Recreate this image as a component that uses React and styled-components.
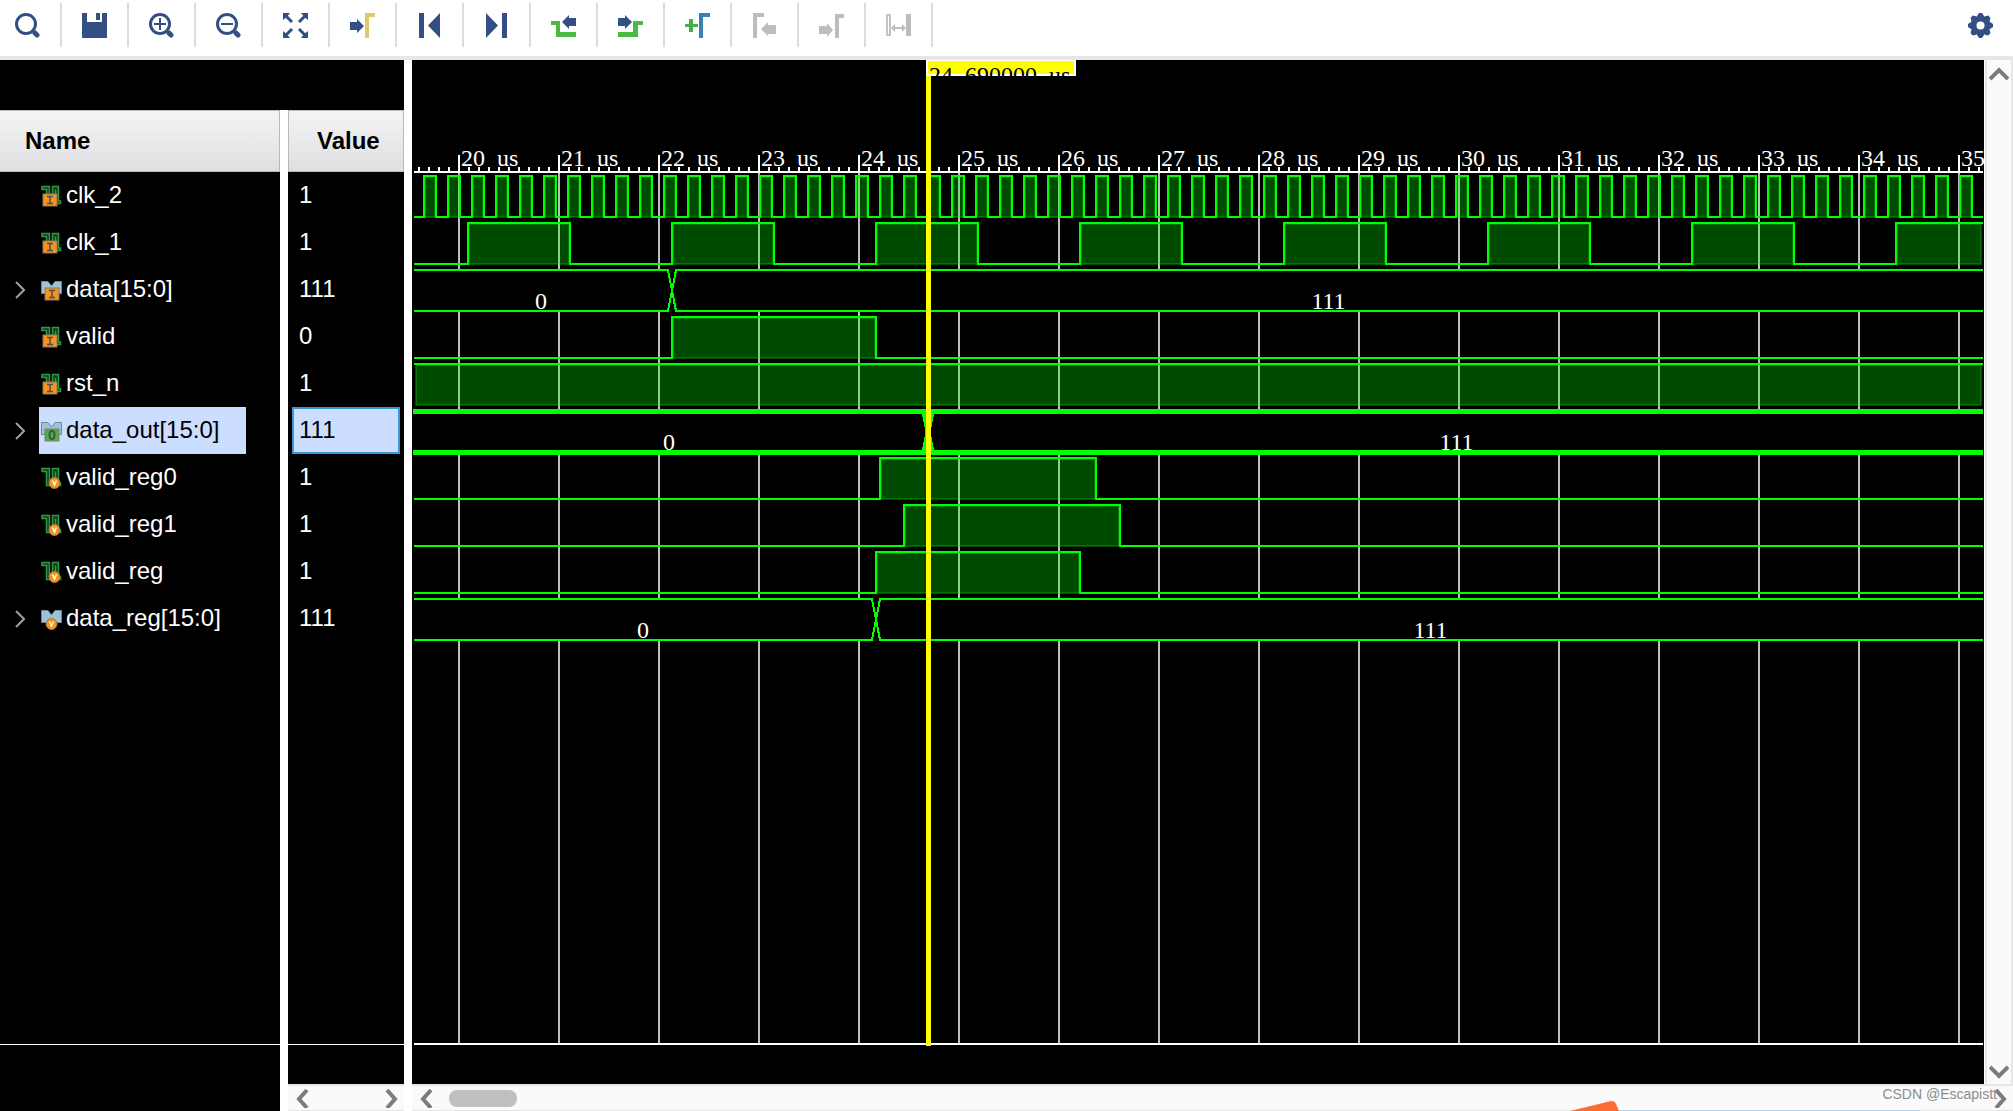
import { useLayoutEffect, useRef, useState } from "react";
import styled, { createGlobalStyle } from "styled-components";

const ROW = 47;
const PX_PER_US = 100;
const RULER_Y = 112;

const pulses = (first, high, period) => {
  const list = [];
  for (let i = 0; i < 200; i++) {
    list.push([first + i * period, first + i * period + high]);
  }
  return list;
};

const signals = [
  { name: "clk_2", value: "1", icon: "in", high: pulses(19.65, 0.12, 0.24) },
  { name: "clk_1", value: "1", icon: "in", high: pulses(20.09, 1.02, 2.04) },
  { name: "data[15:0]", value: "111", icon: "busIn", change: 22.13 },
  { name: "valid", value: "0", icon: "in", high: [[22.13, 24.17]] },
  { name: "rst_n", value: "1", icon: "in", high: [[0, 1000]] },
  {
    name: "data_out[15:0]",
    value: "111",
    icon: "busOut",
    change: 24.69,
    selected: true,
  },
  { name: "valid_reg0", value: "1", icon: "reg", high: [[24.21, 26.37]] },
  { name: "valid_reg1", value: "1", icon: "reg", high: [[24.45, 26.61]] },
  { name: "valid_reg", value: "1", icon: "reg", high: [[24.17, 26.21]] },
  { name: "data_reg[15:0]", value: "111", icon: "busReg", change: 24.17 },
];

const timeX = (t) => Math.round((t - 20) * PX_PER_US) + 47;

const arrowRight = (y) => `M0 ${y - 4}H7V${y - 7}L14 ${y}L7 ${y + 7}V${y + 4}H0Z`;
const arrowLeft = (y) =>
  `M25 ${y - 4}H18V${y - 7}L11 ${y}L18 ${y + 7}V${y + 4}H25Z`;

const Lens = ({ children }) => (
  <>
    <circle cx="11" cy="11" r="9.5" fill="none" stroke="#334f84" strokeWidth="3" />
    <path d="M20 20L22 22" stroke="#334f84" strokeWidth="5" strokeLinecap="round" />
    {children}
  </>
);

const tools = [
  { label: "Search", art: <Lens /> },
  {
    label: "Save",
    art: <path d="M0 0H5V9H20V0H25V25H0ZM14 0H18V7H14Z" />,
  },
  {
    label: "Zoom in",
    art: (
      <Lens>
        <path d="M5 11H17M11 5V17" stroke="#334f84" strokeWidth="2" />
      </Lens>
    ),
  },
  {
    label: "Zoom out",
    art: (
      <Lens>
        <path d="M5 11H17" stroke="#334f84" strokeWidth="2" />
      </Lens>
    ),
  },
  {
    label: "Zoom fit",
    art: (
      <>
        <path d="M0 0H7L5 2.5L2.5 5L0 7ZM25 0V7L22.5 5L20 2.5L18 0ZM0 25V18L2.5 20L5 22.5L7 25ZM25 25H18L20 22.5L22.5 20L25 18Z" />
        <path
          d="M3 3L9 9M22 3L16 9M3 22L9 16M22 22L16 16"
          stroke="#334f84"
          strokeWidth="3"
        />
      </>
    ),
  },
  {
    label: "Go to cursor",
    art: (
      <>
        <path d={arrowRight(13)} />
        <path d="M15 0H25V4H19V25H15Z" fill="#dfc964" />
      </>
    ),
  },
  { label: "Go to start", art: <path d="M2 0H7V25H2ZM23 0V25L11 12.5Z" /> },
  { label: "Go to end", art: <path d="M2 0L14 12.5L2 25ZM18 0H23V25H18Z" /> },
  {
    label: "Previous transition",
    art: (
      <>
        <path d={arrowLeft(9)} />
        <path d="M0 8H9V19H25V24H5V12H0Z" fill="#4cb944" />
      </>
    ),
  },
  {
    label: "Next transition",
    art: (
      <>
        <path d={arrowRight(9)} />
        <path d="M0 19H15V8H25V12H20V24H0Z" fill="#4cb944" />
      </>
    ),
  },
  {
    label: "Add marker",
    art: (
      <>
        <path d="M0 11H4V6H8V11H13V14H8V19H4V14H0Z" fill="#45b04a" />
        <path d="M14 0H25V4H18V25H14Z" fill="#3a80b4" />
      </>
    ),
  },
  {
    label: "Previous marker",
    disabled: true,
    art: (
      <path d="M1 0H12V4H5V25H1ZM24 12H16V9L9 16L16 23V21H24Z" fill="#bdbdbd" />
    ),
  },
  {
    label: "Next marker",
    disabled: true,
    art: (
      <path d="M16 1H25V5H20V25H16ZM0 13H8V10L14 17L8 24V21H0Z" fill="#bdbdbd" />
    ),
  },
  {
    label: "Swap markers",
    disabled: true,
    art: (
      <>
        <path d="M1 2H4V22H1Z" fill="none" stroke="#c4c4c4" strokeWidth="2" />
        <path d="M20 1H25V23H20ZM5 15L9 11V14H16V11L20 15L16 19V16H9V19Z" fill="#bdbdbd" />
      </>
    ),
  },
];

const Wave = () => (
  <path
    d="M1 1.5H8.5V16H11.5V1.5H17.5V16H19.5V18.5H14.5V4.5V18.5H5.5V4.5H1Z"
    fill="#123d1c"
    stroke="#309948"
    strokeWidth="1.5"
  />
);

const Bus = () => (
  <path
    d="M0.5 2.5H7L10.5 7L14 2.5H20.5V14.5H0.5Z"
    fill="#9cc3d8"
    stroke="#6e8a98"
    strokeWidth="1"
  />
);

const Port = ({ x, fill, letter }) => (
  <>
    <rect x={x} y="9" width="14" height="12" fill={fill} stroke="#8a7a60" />
    {letter === "I" ? (
      <path
        d={`M${x + 4} 11.5H${x + 10}M${x + 7} 11V19M${x + 4} 18.5H${x + 10}`}
        stroke="#4d4d4d"
        strokeWidth="1.5"
      />
    ) : (
      <ellipse cx={x + 7} cy="15" rx="2.5" ry="4" fill="none" stroke="#3d5a3d" strokeWidth="2" />
    )}
  </>
);

const Reg = ({ x }) => (
  <>
    <circle cx={x} cy="16" r="5.5" fill="#f7931e" stroke="#a8763a" strokeWidth="1" />
    <path d={`M${x - 2} 13.5L${x} 18L${x + 2} 13.5`} fill="none" stroke="#fff" strokeWidth="1.5" />
  </>
);

const SignalIcon = ({ kind }) => (
  <svg width="21" height="22" viewBox="0 0 21 22" aria-hidden="true">
    {kind.startsWith("bus") ? <Bus /> : <Wave />}
    {kind === "in" && <Port x={2} fill="#f7931e" letter="I" />}
    {kind === "busIn" && <Port x={4} fill="#f7931e" letter="I" />}
    {kind === "busOut" && <Port x={4} fill="#4caf50" letter="O" />}
    {kind === "reg" && <Reg x={13.5} />}
    {kind === "busReg" && <Reg x={10.5} />}
  </svg>
);

const chevrons = {
  left: "M15 2L7 11L15 20",
  right: "M7 2L15 11L7 20",
  up: "M1 15L10 6L19 15",
  down: "M1 6L10 15L19 6",
};

const Arrow = ({ dir }) => (
  <svg width="20" height="20" viewBox="0 0 20 20" aria-hidden="true">
    <path d={chevrons[dir]} fill="none" stroke="#7c7c7c" strokeWidth="4" />
  </svg>
);

const BitTrace = ({ high, top, end }) => {
  const up = top + 4;
  const low = top + 45;
  const shown = high
    .map(([a, b]) => [Math.max(timeX(a), 2), Math.min(timeX(b), end)])
    .filter(([a, b]) => a < end && b > 2);
  let d = "";
  let pen = `M2 ${low}`;
  shown.forEach(([a, b]) => {
    d += a === 2 ? `M2 ${up}` : `${pen}H${a}V${up}`;
    d += `H${b}`;
    if (b < end) d += `V${low}`;
    pen = "";
  });
  if (!shown.length || shown[shown.length - 1][1] < end) d += `${pen}H${end}`;

  return (
    <>
      {shown.map(([a, b]) => {
        const x0 = a === 2 ? 3 : a;
        const x1 = b === end ? end - 1 : b;
        return (
          <g key={a} fill="#00ff00" fillOpacity="0.29">
            <rect x={x0} y={up} width={x1 - x0} height="42" />
            <rect
              x={x0 + 1.5}
              y={top + 5.5}
              width={Math.max(x1 - x0 - 3, 1)}
              height="39"
              fill="none"
              stroke="#00ff00"
              strokeOpacity="0.25"
            />
          </g>
        );
      })}
      <path d={d} fill="none" stroke="#00ff00" strokeWidth="2" />
    </>
  );
};

const BusTrace = ({ change, top, end, selected }) => {
  const x = timeX(change);
  const shift = selected ? 0.5 : 0;
  const up = top + 4 + shift;
  const low = top + 45 + shift;
  const start = selected ? 1 : 2;
  return (
    <>
      <rect x="0" y={up} width={end} height={low - up} fill="#000" />
      <path
        d={`M${start} ${up}H${x - 4}L${x + 4} ${low}H${end}M${start} ${low}H${x - 4}L${x + 4} ${up}H${end}`}
        fill="none"
        stroke="#00ff00"
        strokeWidth={selected ? 5 : 2}
      />
      <WaveText x={(2 + x - 4) / 2} y={top + 43} textAnchor="middle">
        0
      </WaveText>
      <WaveText x={(x + 4 + end) / 2 - 1} y={top + 43} textAnchor="middle">
        111
      </WaveText>
    </>
  );
};

const Ruler = ({ end }) => {
  const ticks = [];
  for (let x = 7; x < end; x += 10) {
    const major = (x - 47) % PX_PER_US === 0;
    ticks.push(
      <rect key={x} x={x - 1} y={major ? 95 : 107} width="2" height={major ? 16 : 4} />
    );
  }
  return (
    <g fill="#fff">
      {ticks}
      <rect x="2" y={RULER_Y - 1} width={end - 2} height="2" />
    </g>
  );
};

const WaveChart = () => {
  const boxRef = useRef();
  const [size, setSize] = useState({ width: 0, height: 0 });

  useLayoutEffect(() => {
    const measure = () => {
      const { clientWidth, clientHeight } = boxRef.current;
      setSize({ width: clientWidth, height: clientHeight });
    };
    measure();
    window.addEventListener("resize", measure);
    return () => window.removeEventListener("resize", measure);
  }, []);

  const { width, height } = size;
  const end = width - 1;
  const base = height - 41;
  const cursor = timeX(24.69);
  const marks = [];
  for (let t = 20; timeX(t) < end; t++) marks.push(t);

  return (
    <ChartBox ref={boxRef}>
      {width > 0 && (
        <svg width={width} height={height} shapeRendering="crispEdges">
          {marks.map((t) => (
            <rect
              key={t}
              x={timeX(t) - 1}
              y={RULER_Y}
              width="2"
              height={base - RULER_Y}
              fill="#bebebe"
            />
          ))}
          <Ruler end={end} />
          {marks.map((t) => (
            <WaveText key={t} x={timeX(t) + 2} y="106">
              {t} <tspan dx="6">us</tspan>
            </WaveText>
          ))}
          {signals.map((s, i) =>
            s.high ? (
              <BitTrace key={s.name} {...s} top={RULER_Y + i * ROW} end={end} />
            ) : (
              <BusTrace key={s.name} {...s} top={RULER_Y + i * ROW} end={end} />
            )
          )}
          <rect x="2" y={base} width={end - 2} height="2" fill="#fff" />
          <rect x={cursor - 2} y="16" width="5" height={base - 13} fill="#ffff00" />
          <svg x={cursor - 2} y="0" width="150" height="16">
            <rect width="150" height="16" fill="#fff" />
            <rect x="2" y="1" width="146" height="13" fill="#ffff00" />
            <WaveText x="3" y="23" $dark>
              24.<tspan dx="6">690000</tspan> <tspan dx="6">us</tspan>
            </WaveText>
          </svg>
        </svg>
      )}
    </ChartBox>
  );
};

const App = () => {
  return (
    <>
      <GlobalStyle />
      <Shell>
        <Toolbar>
          {tools.map((t) => (
            <ToolButton key={t.label} aria-label={t.label} disabled={t.disabled}>
              <svg width="25" height="25" viewBox="0 0 25 25">
                {t.art}
              </svg>
            </ToolButton>
          ))}
          <SettingsButton aria-label="Settings">
            <svg width="25" height="25" viewBox="0 0 25 25">
              {[0, 45, 90, 135].map((a) => (
                <path
                  key={a}
                  d="M9 3L11 0H14L16 3V22L14 25H11L9 22Z"
                  transform={`rotate(${a} 12.5 12.5)`}
                />
              ))}
              <circle cx="12.5" cy="12.5" r="9.5" />
              <circle cx="12.5" cy="12.5" r="4" fill="#fff" />
            </svg>
          </SettingsButton>
        </Toolbar>

        <Panels>
          <SignalPanel>
            <TopBand />
            <Columns>
              <Column $width="280px">
                <Header $indent="25px">Name</Header>
                <List>
                  {signals.map((s) => (
                    <NameRow key={s.name}>
                      <Expander>
                        {s.change && (
                          <ExpandButton aria-label={`Expand ${s.name}`}>
                            <svg width="10" height="18" viewBox="0 0 10 18">
                              <path
                                d="M1 1L9 9L1 17"
                                fill="none"
                                stroke="#a0a0a0"
                                strokeWidth="2"
                              />
                            </svg>
                          </ExpandButton>
                        )}
                      </Expander>
                      <NameLabel $selected={s.selected}>
                        <SignalIcon kind={s.icon} />
                        {s.name}
                      </NameLabel>
                    </NameRow>
                  ))}
                </List>
                <Footer $height="67px" />
              </Column>
              <Column $width="116px">
                <Header $indent="28px">Value</Header>
                <List>
                  {signals.map((s) => (
                    <ValueRow key={s.name} $selected={s.selected}>
                      {s.value}
                    </ValueRow>
                  ))}
                </List>
                <Footer $height="40px" />
                <HScroll>
                  <ScrollButton aria-label="Scroll values left">
                    <Arrow dir="left" />
                  </ScrollButton>
                  <ScrollButton aria-label="Scroll values right">
                    <Arrow dir="right" />
                  </ScrollButton>
                </HScroll>
              </Column>
            </Columns>
          </SignalPanel>

          <WavePanel>
            <WaveBody>
              <WaveChart />
              <VScroll>
                <ScrollButton aria-label="Scroll up">
                  <Arrow dir="up" />
                </ScrollButton>
                <ScrollButton aria-label="Scroll down">
                  <Arrow dir="down" />
                </ScrollButton>
              </VScroll>
            </WaveBody>
            <HScroll>
              <ScrollButton aria-label="Scroll waves left">
                <Arrow dir="left" />
              </ScrollButton>
              <Thumb />
              <ScrollButton aria-label="Scroll waves right">
                <Arrow dir="right" />
              </ScrollButton>
            </HScroll>
          </WavePanel>
        </Panels>
        <Sticker width="350" height="10" viewBox="0 0 350 10" aria-hidden="true">
          <path d="M49 9H350V10H49Z" fill="#b5cfe3" />
          <path d="M0 10L41 0Q45 0 46 3L49 10Z" fill="#fc6d35" />
        </Sticker>
        <Watermark>CSDN @Escapistt</Watermark>
      </Shell>
    </>
  );
};

export default App;

const GlobalStyle = createGlobalStyle`
  * {
    box-sizing: border-box;
  }
  body {
    margin: 0;
    background: #fff;
    font-family: "Liberation Sans", Arial, sans-serif;
  }
  button {
    border: none;
    background: none;
    padding: 0;
  }
  svg {
    display: block;
    flex-shrink: 0;
  }
`;

const Shell = styled.div`
  position: relative;
  display: flex;
  flex-direction: column;
  min-height: 100vh;
  overflow: hidden;
`;

const Toolbar = styled.div`
  display: flex;
  height: 60px;
  padding-top: 3px;
  background: #fff;
  border-bottom: 4px solid #e6e6e6;
`;

const ToolButton = styled.button`
  height: 44px;
  padding: 10px 20px;
  border-right: 2px solid #dcdcdc;
  fill: #334f84;

  &:first-child {
    padding-left: 15px;
  }
`;

const SettingsButton = styled.button`
  height: 44px;
  padding: 10px 20px;
  margin-left: auto;
  fill: #334f84;
`;

const Panels = styled.div`
  flex: 1;
  display: flex;
  gap: 8px;
`;

const SignalPanel = styled.div`
  display: flex;
  flex-direction: column;
  flex-shrink: 0;
`;

const TopBand = styled.div`
  height: 50px;
  background: #000;
`;

const Columns = styled.div`
  flex: 1;
  display: flex;
  gap: 8px;
`;

const Column = styled.div`
  display: flex;
  flex-direction: column;
  width: ${(p) => p.$width};
  background: #000;
  color: #fff;
  font-size: 24px;
`;

const Header = styled.div`
  height: 62px;
  padding-left: ${(p) => p.$indent};
  line-height: 60px;
  font-weight: bold;
  color: #000;
  background: linear-gradient(#f4f4f4, #dfdfe2);
  border: 1px solid #b9b9b9;
  border-left-width: ${(p) => (p.$indent === "25px" ? "0" : "1px")};
`;

const List = styled.ul`
  flex: 1;
  margin: 0;
  padding: 0;
  list-style: none;
`;

const NameRow = styled.li`
  display: flex;
  height: 47px;
`;

const Expander = styled.div`
  display: flex;
  align-items: center;
  width: 39px;
  padding-left: 15px;
`;

const ExpandButton = styled.button`
  display: block;
`;

const NameLabel = styled.div`
  display: flex;
  align-items: center;
  gap: 4px;
  padding: 0 27px 2px 2px;
  line-height: 45px;
  background: ${(p) => (p.$selected ? "#ccdeff" : "none")};
  color: ${(p) => (p.$selected ? "#000" : "#fff")};

  svg {
    margin-top: 2px;
  }
`;

const ValueRow = styled.li`
  height: 47px;
  margin: 0 4px;
  padding-left: 5px;
  line-height: 41px;
  border: 2px solid ${(p) => (p.$selected ? "#3c96d8" : "transparent")};
  background: ${(p) => (p.$selected ? "#ccdeff" : "none")};
  color: ${(p) => (p.$selected ? "#000" : "#fff")};
`;

const Footer = styled.div`
  height: ${(p) => p.$height};
  border-top: 1px solid #fff;
`;

const WavePanel = styled.div`
  flex: 1;
  display: flex;
  flex-direction: column;
  min-width: 0;
`;

const WaveBody = styled.div`
  flex: 1;
  display: flex;
  gap: 1px;
`;

const ChartBox = styled.div`
  flex: 1;
  min-width: 0;
  overflow: hidden;
  background: #000;
`;

const WaveText = styled.text`
  font-family: "Liberation Serif", "Times New Roman", serif;
  font-size: 24px;
  fill: ${(p) => (p.$dark ? "#000" : "#fff")};
`;

const VScroll = styled.div`
  display: flex;
  flex-direction: column;
  justify-content: space-between;
  align-items: center;
  width: 28px;
  padding: 4px 0 3px;
  background: #fafafa;
  border: 0 solid #e6e6e6;
  border-width: 0 2px;
`;

const HScroll = styled.div`
  display: flex;
  align-items: center;
  height: 27px;
  padding: 0 4px;
  background: #fafafa;
  border-top: 2px solid #e6e6e6;
  border-bottom: 1px solid #e6e6e6;

  button:last-child {
    margin-left: auto;
  }
`;

const ScrollButton = styled.button`
  display: block;
`;

const Thumb = styled.div`
  width: 68px;
  height: 17px;
  margin-left: 13px;
  border-radius: 8px;
  background: #c0c0c0;
`;

const Sticker = styled.svg`
  position: absolute;
  right: 93px;
  bottom: 0;
`;

const Watermark = styled.div`
  position: absolute;
  right: 16px;
  bottom: 9px;
  font-size: 14px;
  line-height: 16px;
  color: #8c8c8c;
`;
